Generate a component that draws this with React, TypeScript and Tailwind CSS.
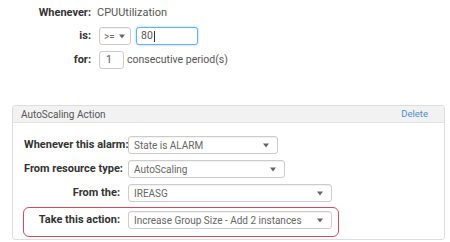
import React from "react";

function Caret() {
  return (
    <svg width="6" height="5" viewBox="0 0 6 5" className="shrink-0">
      <path d="M0 0.5h6L3 4.5z" fill="#666" />
    </svg>
  );
}

function Select({ value, className }: { value: string; className: string }) {
  return (
    <div
      className={`flex h-[18px] items-center justify-between rounded-[3px] border border-[#ccc] bg-white text-[10px] text-[#666] shadow-[inset_0_1px_1px_rgba(0,0,0,0.06)] ${className}`}
    >
      <span className="whitespace-nowrap">{value}</span>
      <Caret />
    </div>
  );
}

function ActionRow({
  label,
  value,
  selectWidth,
  highlight,
}: {
  label: string;
  value: string;
  selectWidth: string;
  highlight?: boolean;
}) {
  return (
    <div
      className={
        highlight
          ? "ml-[10px] mr-[105px] flex items-center gap-[8px] rounded-[6px] border border-[#d24a5e] pt-[3px] pb-[7px] pr-[6px]"
          : "ml-[10px] flex items-center gap-[8px] border border-transparent"
      }
    >
      <div className="w-[96px] shrink-0 whitespace-nowrap text-right text-[11px] font-bold text-[#333]">
        {label}
      </div>
      <Select value={value} className={`pl-[5px] pr-[8px] ${selectWidth}`} />
    </div>
  );
}

export default function App() {
  return (
    <div className="h-[242px] w-[450px] overflow-hidden bg-white font-['Roboto','Liberation_Sans',sans-serif]">
      <div className="pt-[6px]">
        <div className="flex h-[14px] items-center">
          <div className="w-[91px] whitespace-nowrap text-right text-[11px] font-bold text-[#333]">
            Whenever:
          </div>
          <div className="ml-[6px] text-[11px] text-[#555]">CPUUtilization</div>
        </div>

        <div className="mt-[7px] flex h-[18px] items-center">
          <div className="w-[91px] text-right text-[11px] font-bold text-[#333]">is:</div>
          <div className="ml-[8px] flex items-center gap-[5px]">
            <Select value=">=" className="w-[32px] pl-[4px] pr-[5px]" />
            <div className="flex h-[18px] w-[62px] items-center rounded-[3px] border border-[#66afe9] bg-white pl-[4px] text-[10.5px] text-[#555] shadow-[0_0_3px_rgba(102,175,233,0.6)]">
              80
              <span className="ml-[1px] h-[11px] w-px bg-[#333]" />
            </div>
          </div>
        </div>

        <div className="mt-[6px] flex h-[18px] items-center">
          <div className="w-[91px] text-right text-[11px] font-bold text-[#333]">for:</div>
          <div className="ml-[8px] flex items-center gap-[3px]">
            <div className="flex h-[18px] w-[25px] items-center rounded-[3px] border border-[#ccc] bg-white pl-[6px] text-[10.5px] text-[#555]">
              1
            </div>
            <span className="whitespace-nowrap text-[10.5px] text-[#555]">consecutive period(s)</span>
          </div>
        </div>
      </div>

      <div className="ml-[12px] mt-[36px] w-[433px] rounded-[3px] border border-[#ddd] bg-white pb-[2px]">
        <div className="flex h-[17px] items-center justify-between rounded-t-[3px] border-b border-[#e2e2e2] bg-[#f2f2f2] pl-[8px] pr-[16px]">
          <span className="text-[10px] text-[#555]">AutoScaling Action</span>
          <span className="text-[9.5px] text-[#4a8fc8]">Delete</span>
        </div>

        <div className="flex flex-col gap-[4px] pt-[12px]">
          <ActionRow label="Whenever this alarm:" value="State is ALARM" selectWidth="w-[150px]" />
          <ActionRow label="From resource type:" value="AutoScaling" selectWidth="w-[157px]" />
          <ActionRow label="From the:" value="IREASG" selectWidth="w-[204px]" />
          <ActionRow
            label="Take this action:"
            value="Increase Group Size - Add 2 instances"
            selectWidth="w-[204px]"
            highlight
          />
        </div>
      </div>
    </div>
  );
}
